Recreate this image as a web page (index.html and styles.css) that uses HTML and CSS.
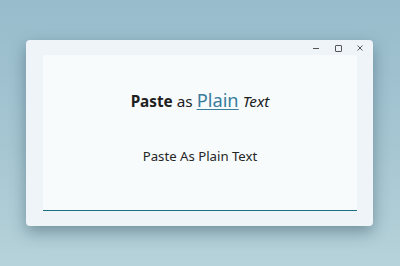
FILE: index.html
```html
<!DOCTYPE html>
<html lang="en">
<head>
    <meta charset="UTF-8">
    <title>Paste As Plain Text</title>
    <link rel="stylesheet" href="styles.css">
</head>
<body>
    <div class="window">
        <div class="titlebar">
            <span class="cap cap-min"></span>
            <span class="cap cap-max"></span>
            <span class="cap cap-close">
                <svg width="6" height="6" viewBox="0 0 6 6"><path d="M0.5 0.5L5.5 5.5M5.5 0.5L0.5 5.5" stroke="#444" stroke-width="0.9"/></svg>
            </span>
        </div>
        <div class="content">
            <h1 class="title"><b>Paste</b> as <a class="plain" href="#">Plain</a> <i>Text</i></h1>
            <p class="subtitle">Paste As Plain Text</p>
        </div>
    </div>
</body>
</html>
```

FILE: styles.css
```css
html, body {
    height: 100%;
}

body {
    margin: 0;
    padding: 40px 0 0 26px;
    box-sizing: border-box;
    font-family: "Noto Sans", "Open Sans", sans-serif;
    background: linear-gradient(180deg, #98bccc 0%, #a6c6d2 55%, #b6d2da 100%);
}

.window {
    width: 347px;
    height: 186px;
    background-color: #eef4f8;
    border-radius: 4px;
    box-shadow: 0px 6px 16px rgba(40, 70, 85, 0.45);
    display: flex;
    flex-direction: column;
}

.titlebar {
    height: 15px;
    display: flex;
    justify-content: flex-end;
    align-items: center;
    padding-right: 9px;
    gap: 14px;
}

.cap {
    width: 8px;
    height: 8px;
    display: flex;
    align-items: center;
    justify-content: center;
    margin-top: 1px;
}

.cap-min::before {
    content: "";
    width: 6px;
    height: 1px;
    background-color: #555;
}

.cap-max::before {
    content: "";
    width: 5px;
    height: 5px;
    border: 1px solid #555;
    border-radius: 1px;
}

.content {
    margin: 0 16px 0 17px;
    height: 155px;
    background-color: #f7fbfc;
    border-bottom: 1px solid #1d6f80;
    border-radius: 2px 2px 0 0;
    display: flex;
    flex-direction: column;
    align-items: center;
}

.title {
    margin: 33px 0 0 0;
    font-size: 15.3px;
    font-weight: normal;
    color: #202020;
    line-height: 24px;
}

.title b {
    font-weight: bold;
}

.plain {
    font-size: 18.3px;
    color: #3b7d9c;
    text-decoration: underline;
    text-decoration-thickness: 1px;
    text-underline-offset: 2px;
}

.subtitle {
    margin: 34px 0 0 0;
    font-size: 13.2px;
    color: #262626;
}
```
